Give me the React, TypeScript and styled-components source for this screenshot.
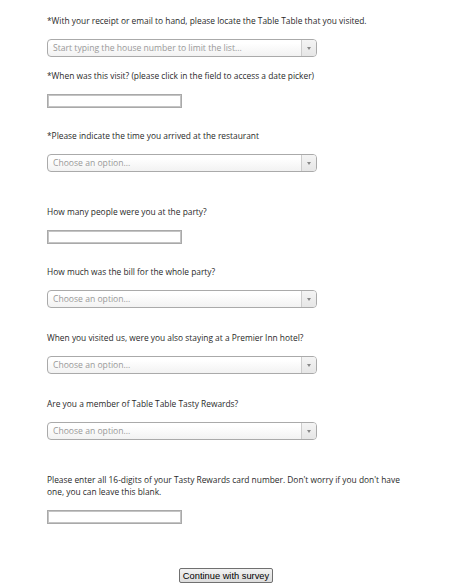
import React from 'react'
import styled, { createGlobalStyle } from 'styled-components'

const GlobalStyle = createGlobalStyle`
    body {
        margin: 0;
        background: #ffffff;
        font-family: "Open Sans", "DejaVu Sans", sans-serif;
    }
`

const Form = styled.form`
    display: flex;
    flex-direction: column;
    align-items: flex-start;
    padding: 15px 0 0 47px;
    width: 370px;
`

const Field = styled.div<{ $after: number }>`
    display: flex;
    flex-direction: column;
    align-items: flex-start;
    gap: 12px;
    margin-bottom: ${props => props.$after}px;
`

const Label = styled.label`
    font-size: 8.4px;
    line-height: 12px;
    color: #2a2a2a;
    max-width: 365px;
`

const TextBox = styled.input`
    box-sizing: border-box;
    width: 135px;
    height: 14px;
    margin: 0;
    padding: 0;
    border: 1px solid #a9a9a9;
    box-shadow: inset 0 0 0 1px #c4c4c4;
    background: #ffffff;
`

const Select = styled.div`
    box-sizing: border-box;
    display: flex;
    align-items: stretch;
    width: 270px;
    height: 18px;
    border: 1px solid #aaaaaa;
    border-radius: 4px;
    background: linear-gradient(#ffffff 20%, #f2f2f2 100%);
    overflow: hidden;
`

const Placeholder = styled.span`
    flex: 1;
    padding-left: 5px;
    font-size: 8.6px;
    line-height: 16px;
    color: #999999;
`

const Arrow = styled.span`
    display: flex;
    align-items: center;
    justify-content: center;
    width: 14px;
    border-left: 1px solid #cccccc;
    background: linear-gradient(#f4f4f4, #e6e6e6);
    &::after {
        content: '';
        border-left: 2.5px solid transparent;
        border-right: 2.5px solid transparent;
        border-top: 3px solid #888888;
    }
`

const Submit = styled.div`
    align-self: stretch;
    display: flex;
    justify-content: center;
    padding-right: 12px;
`

const Button = styled.button`
    font-family: "Liberation Sans", Arial, sans-serif;
    font-size: 9.3px;
    line-height: 12px;
    height: 15px;
    padding: 0 3px;
    color: #000000;
    background: linear-gradient(#f2f2f2, #dddddd);
    border: 1px solid #707070;
    border-radius: 2px;
`

function Dropdown({ text }: { text: string }) {
    return (
        <Select>
            <Placeholder>{text}</Placeholder>
            <Arrow />
        </Select>
    )
}

const choose = 'Choose an option...'

export default function App() {
    return (
        <>
            <GlobalStyle />
            <Form onSubmit={e => e.preventDefault()}>
                <Field $after={13}>
                    <Label>*With your receipt or email to hand, please locate the Table Table that you visited.</Label>
                    <Dropdown text="Start typing the house number to limit the list..." />
                </Field>
                <Field $after={22}>
                    <Label>*When was this visit? (please click in the field to access a date picker)</Label>
                    <TextBox />
                </Field>
                <Field $after={34}>
                    <Label>*Please indicate the time you arrived at the restaurant</Label>
                    <Dropdown text={choose} />
                </Field>
                <Field $after={22}>
                    <Label>How many people were you at the party?</Label>
                    <TextBox />
                </Field>
                <Field $after={24}>
                    <Label>How much was the bill for the whole party?</Label>
                    <Dropdown text={choose} />
                </Field>
                <Field $after={24}>
                    <Label>When you visited us, were you also staying at a Premier Inn hotel?</Label>
                    <Dropdown text={choose} />
                </Field>
                <Field $after={34}>
                    <Label>Are you a member of Table Table Tasty Rewards?</Label>
                    <Dropdown text={choose} />
                </Field>
                <Field $after={44}>
                    <Label>Please enter all 16-digits of your Tasty Rewards card number. Don't worry if you don't have one, you can leave this blank.</Label>
                    <TextBox />
                </Field>
                <Submit>
                    <Button type="submit">Continue with survey</Button>
                </Submit>
            </Form>
        </>
    )
}
